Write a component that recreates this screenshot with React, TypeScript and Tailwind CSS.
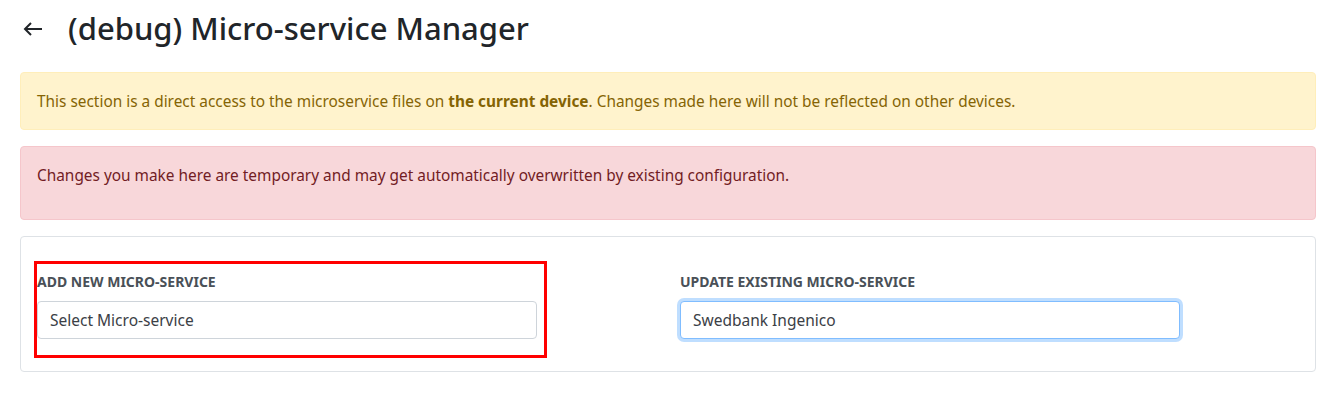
export default function App() {
  return (
    <div className="min-h-screen bg-white font-['Noto_Sans',sans-serif] text-[#212529]">
      <div className="w-[1296px] ml-5">
        <div className="flex items-center h-[60px] pb-[4px]">
          <svg className="ml-[3px] mt-[2px]" width="19" height="14" viewBox="0 0 19 14" fill="none" stroke="#212529" strokeWidth="2">
            <path d="M19 7H2" />
            <path d="M8 1L2 7l6 6" />
          </svg>
          <h1 className="ml-[26px] text-[31px] font-medium leading-none">(debug) Micro-service Manager</h1>
        </div>

        <div className="mt-3 rounded border border-[#ffeeba] bg-[#fff3cd] px-4 pt-[17px] pb-[15px] text-[15.4px] leading-6 text-[#856404]">
          This section is a direct access to the microservice files on <b>the current device</b>. Changes made here
          will not be reflected on other devices.
        </div>

        <div className="mt-4 rounded border border-[#f5c6cb] bg-[#f8d7da] px-4 pt-[17px] pb-[15px] text-[15.4px] leading-6 text-[#721c24]">
          <p className="mb-4">Changes you make here are temporary and may get automatically overwritten by existing configuration.</p>
        </div>

        <div className="mt-4 rounded border border-[#dee2e6] px-[13px] pt-6 pb-[13px]">
          <div className="flex">
            <div className="w-[513px] border-[3px] border-[#f00] pt-2 pb-[16px] pr-[7px]">
              <label className="block mb-[9px] text-[14px] font-bold uppercase leading-5 text-[#495057]">
                Add new micro-service
              </label>
              <select className="block w-full h-[38px] appearance-none rounded border border-[#ced4da] bg-white px-3 pt-[2px] text-[15.5px] text-[#3b4046] outline-none">
                <option>Select Micro-service</option>
              </select>
            </div>

            <div className="ml-[133px] pt-[11px]">
              <label className="block mb-[9px] text-[14px] font-bold uppercase leading-5 text-[#495057]">
                Update existing micro-service
              </label>
              <select className="block w-[500px] h-[38px] appearance-none rounded border border-[#80bdff] bg-white px-3 pt-[2px] text-[15.5px] text-[#3b4046] outline-none shadow-[0_0_0_3px_rgba(0,123,255,0.25)]">
                <option>Swedbank Ingenico</option>
              </select>
            </div>
          </div>
        </div>
      </div>
    </div>
  )
}
